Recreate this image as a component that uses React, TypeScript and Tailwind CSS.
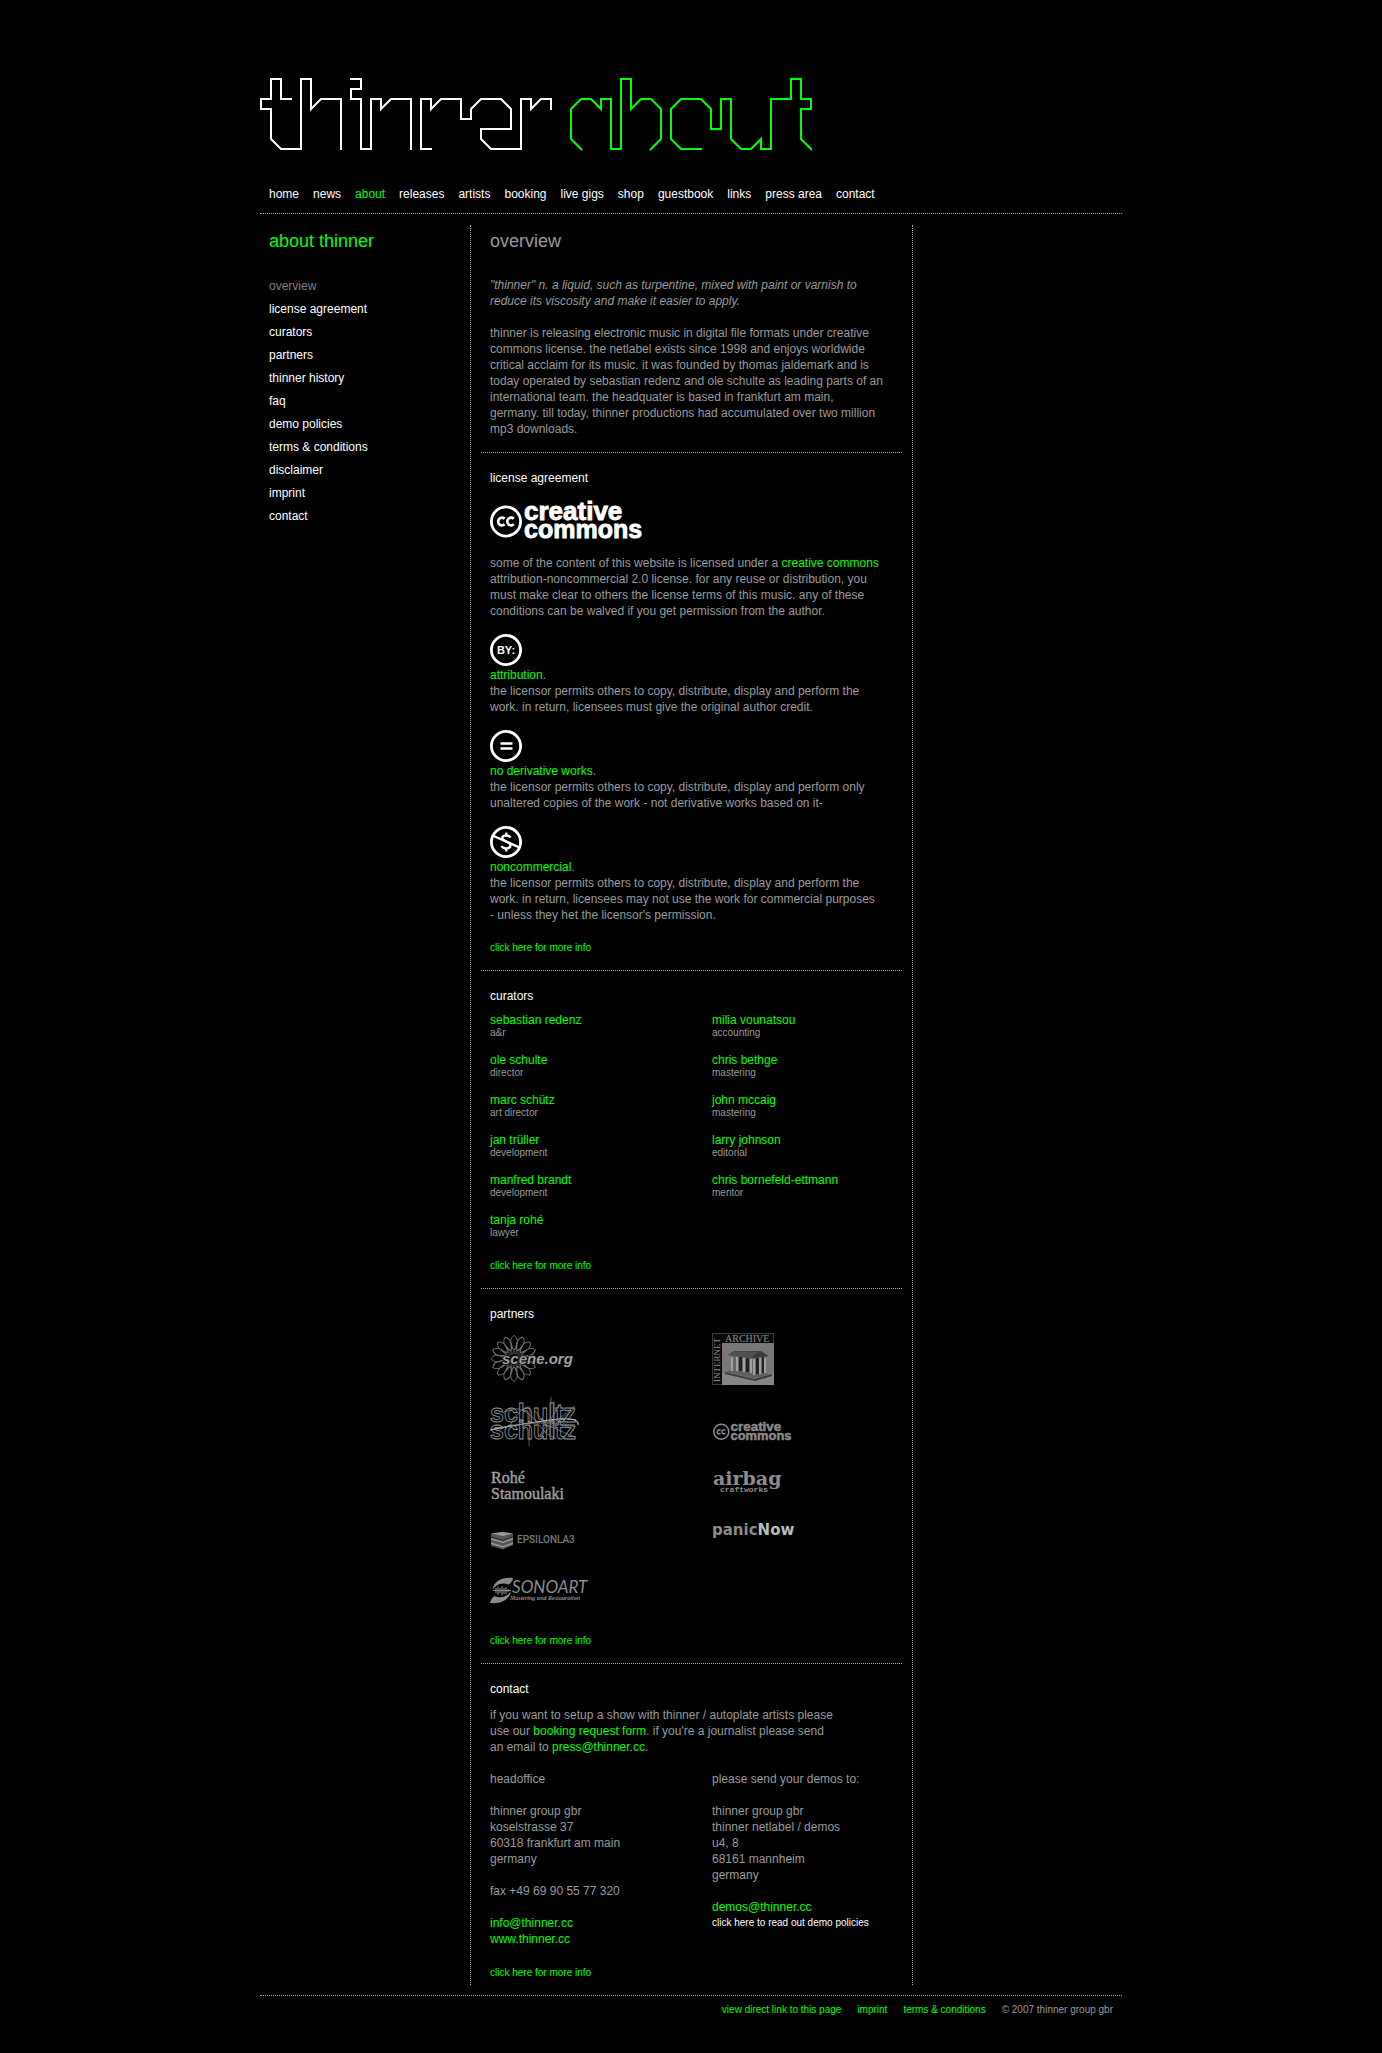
import type { ReactNode } from "react";

const NAV = ["home", "news", "about", "releases", "artists", "booking", "live gigs", "shop", "guestbook", "links", "press area", "contact"];

const SIDE = ["overview", "license agreement", "curators", "partners", "thinner history", "faq", "demo policies", "terms & conditions", "disclaimer", "imprint", "contact"];

const CURATORS: [string, string][][] = [
  [
    ["sebastian redenz", "a&r"],
    ["ole schulte", "director"],
    ["marc schütz", "art director"],
    ["jan trüller", "development"],
    ["manfred brandt", "development"],
    ["tanja rohé", "lawyer"],
  ],
  [
    ["milia vounatsou", "accounting"],
    ["chris bethge", "mastering"],
    ["john mccaig", "mastering"],
    ["larry johnson", "editorial"],
    ["chris bornefeld-ettmann", "mentor"],
  ],
];

function Wordmark() {
  return (
    <svg viewBox="0 0 552 74" className="block h-[74px] w-[552px] max-w-full" fill="none" strokeWidth="2" role="img" aria-label="thinner about">
      <g stroke="#fff">
        <path d="M32 21H21V1H11V21H1V31H11V61L21 71H41V1H51V31L61 21H81V72" />
        <path d="M90 1H101V11H91V21H101V71H111V21H121V31L131 21H151V72" />
        <path d="M172 71H161V21H171V31L181 21H201V41H211V31L221 21H241L251 31V51H221V61L231 71H261V21H271V31L281 21H291V32" />
      </g>
      <g stroke="#0f0">
        <path d="M322 72L311 61V31L321 21H331L341 31V21H351V71H361V1H371V31L381 21H391L401 31V61L390 72" />
        <path d="M442 71H421L411 61V31L421 21H441L451 31V51H461V21H471V61L481 71H491L501 61V71H511V21H531V1H541V21H551V31H541V61L552 72" />
      </g>
    </svg>
  );
}

function CreativeCommons({ className }: { className: string }) {
  return (
    <svg viewBox="0 0 155 38" className={`overflow-visible ${className}`} fill="currentColor" role="img" aria-label="creative commons">
      <circle cx="16" cy="20.5" r="14.6" fill="none" stroke="currentColor" strokeWidth="2.8" />
      <g fill="none" stroke="currentColor" strokeWidth="2.7">
        <path d="M14.6 17.8A3.8 3.8 0 1 0 14.6 23.2" />
        <path d="M23.8 17.8A3.8 3.8 0 1 0 23.8 23.2" />
      </g>
      <g fontFamily="Liberation Sans, Arial, sans-serif" fontWeight="700" stroke="currentColor" strokeWidth="0.9">
        <text x="34" y="19" fontSize="26">creative</text>
        <text x="34" y="36.5" fontSize="25">commons</text>
      </g>
    </svg>
  );
}

function Ring({ label, children }: { label: string; children: ReactNode }) {
  return (
    <svg viewBox="0 0 32 32" className="mt-[15px] block size-8 text-white" fill="none" stroke="currentColor" role="img" aria-label={label}>
      <circle cx="16" cy="16" r="14.6" strokeWidth="2.8" />
      {children}
    </svg>
  );
}

function SceneOrg() {
  const petals = Array.from({ length: 16 }, (_, i) => i * 22.5);
  return (
    <svg viewBox="0 0 84 50" className="block h-[50px] w-[84px] overflow-visible" role="img" aria-label="scene.org">
      <g fill="none" stroke="#777" strokeWidth="0.9">
        {petals.map((a) => (
          <path key={a} d="M24 17C19 11 20 5 24 2.5C28 5 29 11 24 17Z" transform={`rotate(${a} 24 25.5)`} />
        ))}
        {petals.map((a) => (
          <path key={a} d="M24 21L22 12M24 21L26 12" strokeWidth="0.5" transform={`rotate(${a} 24 25.5)`} />
        ))}
      </g>
      <text x="12" y="30.5" fill="#a0a0a0" stroke="#000" strokeWidth="1.5" paintOrder="stroke" fontFamily="Liberation Sans, Arial, sans-serif" fontWeight="700" fontStyle="italic" fontSize="15">
        scene.org
      </text>
    </svg>
  );
}

function Schultz() {
  return (
    <svg viewBox="0 0 90 50" className="mt-[14px] block h-[50px] w-[90px] overflow-visible" fill="none" role="img" aria-label="schultz schultz">
      <g fontFamily="Liberation Sans, Arial, sans-serif" fontWeight="700" fontSize="25" stroke="#999" strokeWidth="0.8">
        <text x="0" y="25">schultz</text>
        <text x="0" y="42">schultz</text>
      </g>
      <g stroke="#888" strokeWidth="0.7">
        <path d="M0 33Q30 27 60 23T88 28" stroke="#bbb" strokeWidth="1.2" />
        <path d="M10 31Q35 25 62 26L86 30" />
        <path d="M12 16Q30 6 42 20L56 36 66 42" />
        <path d="M45 14L58 30 85 9M50 38L62 20 70 8M40 12L39 49M61 0L60 40M64 4V42" />
        <path d="M52 26L85 40M48 40L84 12M68 22L84 34M20 28Q32 8 40 10" />
      </g>
    </svg>
  );
}

function Rohe() {
  return (
    <svg viewBox="0 0 80 34" className="mt-[22px] block h-[34px] w-[80px]" fill="#a0a0a0" fontFamily="Liberation Serif, serif" fontSize="16" stroke="#a0a0a0" strokeWidth="0.4" role="img" aria-label="Rohé Stamoulaki">
      <text x="1" y="14">Rohé</text>
      <text x="1" y="30">Stamoulaki</text>
    </svg>
  );
}

function EpsilonLab() {
  return (
    <svg viewBox="0 0 90 20" className="mt-[28px] block h-[20px] w-[90px]" role="img" aria-label="Epsilonlab">
      <path d="M1 3L12 1 23 3V14L13 18.5 1 15Z" fill="#555" />
      <path d="M1 2.5L12 1 23 2.5 13 5Z" fill="#999" />
      <path d="M1 7L13 10.5 23 7V8.5L13 12 1 8.5ZM1 11.5L13 15 23 11.5V13L13 16.5 1 13Z" fill="#999" />
      <path d="M1 5.5L13 9V10L1 6.5ZM23 5L13 9V10L23 6Z" fill="#222" />
      <text x="27" y="12" fill="#777" fontFamily="Roboto, sans-serif" fontWeight="500" fontSize="10">
        EPSILONLA3
      </text>
    </svg>
  );
}

function Sonoart() {
  return (
    <svg viewBox="0 0 100 27" className="mt-[26px] block h-[27px] w-[100px] overflow-visible" fill="#8c8c8c" role="img" aria-label="Sonoart Mastering und Restauration">
      <path d="M23 1C12 0 4 4 2.500 13C5 8 12 4.500 18.500 7.500C21 6 22.500 4 23 1Z" />
      <path d="M0 26C11 27 19.500 23 21 14C18 19 11 22 4.500 19C2 21 0.500 23 0 26Z" />
      <path d="M3 13.500H21M6 11V16M8 9.500V18M10 11V16M12 9V18.500M14 11V17M16 10V17M18 12V15" stroke="#8c8c8c" strokeWidth="1.1" />
      <text x="22" y="16" fontFamily="Lato, sans-serif" fontStyle="italic" fontSize="17">SONOART</text>
      <text x="20" y="23" fontFamily="Liberation Serif, serif" fontStyle="italic" fontWeight="700" fontSize="6">Mastering und Restauration</text>
    </svg>
  );
}

function InternetArchive() {
  return (
    <svg viewBox="0 0 62 52" className="block h-[52px] w-[62px]" role="img" aria-label="Internet Archive">
      <rect x="0.5" y="0.5" width="61" height="51" fill="#080808" stroke="#3a3a3a" />
      <rect x="10" y="10" width="52" height="42" fill="#777" />
      <rect x="10" y="40" width="52" height="12" fill="#858585" />
      <g fill="#8c8c8c" fontFamily="Liberation Serif, serif">
        <text x="13" y="8.5" fontSize="10">ARCHIVE</text>
        <text transform="translate(8 49) rotate(-90)" fontSize="9">INTERNET</text>
      </g>
      <path d="M13 39L42 46 60 41V43L43 48 13 41Z" fill="#3a3a3a" />
      <path d="M13 39L20 37 60 41 42 45.5Z" fill="#606060" />
      <path d="M19 23H54V40H42L19 37Z" fill="#666" />
      <path d="M27 24H30V38H27ZM34 25H37V39H34ZM44 25H47V41H44ZM50 24H52V40H50Z" fill="#222" />
      <path d="M20 24V38M25 24V38M32 25V39M39 26V40M42 26V42M48 25V41M53 25V40" stroke="#b5b5b5" strokeWidth="1.5" />
      <path d="M16 22L22 18H49L57 23 42 25Z" fill="#3c3c3c" />
      <path d="M16 22L22 18.5H46L40 24Z" fill="#505050" />
    </svg>
  );
}

function Airbag() {
  return (
    <svg viewBox="0 0 90 20" className="mt-[34px] block h-[20px] w-[90px] overflow-visible" fill="#8c8c8c" role="img" aria-label="airbag craftworks">
      <text x="1" y="10" fontFamily="DejaVu Serif, serif" fontWeight="700" fontSize="19">airbag</text>
      <text x="8" y="17" fontFamily="Liberation Mono, monospace" fontWeight="700" fontSize="8">craftworks</text>
    </svg>
  );
}

function PanicNow() {
  return (
    <svg viewBox="0 0 92 22" className="mt-[24px] block h-[22px] w-[92px] overflow-visible" fontFamily="DejaVu Sans, sans-serif" fontWeight="700" fontSize="15" role="img" aria-label="panicNow">
      <text x="0" y="16" fill="#8c8c8c">
        panic<tspan fill="#bbb">Now</tspan>
      </text>
    </svg>
  );
}

function Green({ children }: { children: ReactNode }) {
  return (
    <a href="#" className="text-[#0f0] hover:underline">
      {children}
    </a>
  );
}

function More({ className }: { className: string }) {
  return (
    <p className={`-mb-px text-[10px] ${className}`}>
      <Green>click here for more info</Green>
    </p>
  );
}

function Section({ title, children }: { title: string; children: ReactNode }) {
  return (
    <section className="mt-[15px] border-t border-dotted border-[#aaa] px-[9px] pt-[17px]">
      <h2 className="text-white">{title}</h2>
      {children}
    </section>
  );
}

export default function App() {
  return (
    <div className="min-h-screen bg-black px-4 pt-[78px] pb-[35px] font-['Liberation_Sans',Arial,sans-serif] text-[12px] leading-[16px] text-[#999]">
      <div className="mx-auto w-full max-w-[862px]">
        <header>
          <h1>
            <Wordmark />
          </h1>
          <nav className="mt-[34px] flex flex-wrap gap-x-[14px] border-b border-dotted border-[#aaa] px-[9px] pb-[11px]">
            {NAV.map((n) => (
              <a key={n} href="#" className={n === "about" ? "text-[#0f0]" : "text-white"}>
                {n}
              </a>
            ))}
          </nav>
        </header>

        <div className="mt-[11px] grid grid-cols-[210px_minmax(0,443px)_1fr]">
          <aside className="px-[9px] pt-1">
            <h2 className="text-[18px] leading-[24px] text-[#0f0]">about thinner</h2>
            <nav className="mt-[25px] flex flex-col items-start gap-[7px]">
              {SIDE.map((s) => (
                <a key={s} href="#" className={s === "overview" ? "text-[#808080]" : "text-white"}>
                  {s}
                </a>
              ))}
            </nav>
          </aside>

          <main className="border-x border-dotted border-[#aaa] px-[10px] pt-1 pb-[5px]">
            <section className="px-[9px]">
              <h2 className="text-[18px] leading-[24px]">overview</h2>
              <p className="mt-6 italic">
                "thinner" n. a liquid, such as turpentine, mixed with paint or varnish to
                <br />
                reduce its viscosity and make it easier to apply.
              </p>
              <p className="mt-4">
                thinner is releasing electronic music in digital file formats under creative
                <br />
                commons license. the netlabel exists since 1998 and enjoys worldwide
                <br />
                critical acclaim for its music. it was founded by thomas jaldemark and is
                <br />
                today operated by sebastian redenz and ole schulte as leading parts of an
                <br />
                international team. the headquater is based in frankfurt am main,
                <br />
                germany. till today, thinner productions had accumulated over two million
                <br />
                mp3 downloads.
              </p>
            </section>

            <Section title="license agreement">
              <CreativeCommons className="mt-[15px] block h-[38px] w-[155px] text-white" />
              <p className="mt-4">
                some of the content of this website is licensed under a <Green>creative commons</Green>
                <br />
                attribution-noncommercial 2.0 license. for any reuse or distribution, you
                <br />
                must make clear to others the license terms of this music. any of these
                <br />
                conditions can be walved if you get permission from the author.
              </p>
              <Ring label="attribution">
                <text x="16" y="20" textAnchor="middle" fill="currentColor" stroke="none" fontFamily="Liberation Sans, Arial, sans-serif" fontWeight="700" fontSize="11">
                  BY:
                </text>
              </Ring>
              <p className="mt-px">
                <Green>attribution</Green>.
                <br />
                the licensor permits others to copy, distribute, display and perform the
                <br />
                work. in return, licensees must give the original author credit.
              </p>
              <Ring label="no derivative works">
                <path d="M10.5 13.5H22.5M10.5 18.5H22.5" strokeWidth="2.5" />
              </Ring>
              <p className="mt-px">
                <Green>no derivative works</Green>.
                <br />
                the licensor permits others to copy, distribute, display and perform only
                <br />
                unaltered copies of the work - not derivative works based on it-
              </p>
              <Ring label="noncommercial">
                <path d="M2.5 9.5L29.5 21.5" strokeWidth="2.4" />
                <path d="M20.5 11.5C19 9 12.5 8.5 12.2 12C12.2 15.5 20.5 15.5 20.5 19.5C20 23.5 13 23.2 11.5 20M16.3 6.5V10M16.3 22V25.5" strokeWidth="2.3" />
              </Ring>
              <p className="mt-px">
                <Green>noncommercial</Green>.
                <br />
                the licensor permits others to copy, distribute, display and perform the
                <br />
                work. in return, licensees may not use the work for commercial purposes
                <br />
                - unless they het the licensor's permission.
              </p>
              <More className="mt-[17px]" />
            </Section>

            <Section title="curators">
              <div className="mt-[9px] grid grid-cols-[222px_minmax(0,1fr)]">
                {CURATORS.map((col, i) => (
                  <ul key={i} className="flex flex-col gap-[14px]">
                    {col.map(([name, role]) => (
                      <li key={name}>
                        <div className="leading-[14px]">
                          <Green>{name}</Green>
                        </div>
                        <div className="text-[10px] leading-[12px]">{role}</div>
                      </li>
                    ))}
                  </ul>
                ))}
              </div>
              <More className="mt-[19px]" />
            </Section>

            <Section title="partners">
              <div className="mt-[11px] grid grid-cols-[222px_minmax(0,1fr)]">
                <div>
                  <SceneOrg />
                  <Schultz />
                  <Rohe />
                  <EpsilonLab />
                  <Sonoart />
                </div>
                <div>
                  <InternetArchive />
                  <CreativeCommons className="mt-[36px] ml-px block h-[20px] w-[80px] text-[#8c8c8c]" />
                  <Airbag />
                  <PanicNow />
                </div>
              </div>
              <More className="mt-[29px]" />
            </Section>

            <Section title="contact">
              <p className="mt-[10px]">
                if you want to setup a show with thinner / autoplate artists please
                <br />
                use our <Green>booking request form</Green>. if you're a journalist please send
                <br />
                an email to <Green>press@thinner.cc</Green>.
              </p>
              <div className="mt-4 grid grid-cols-[222px_minmax(0,1fr)]">
                <div>
                  <h3>headoffice</h3>
                  <address className="mt-4 not-italic">
                    thinner group gbr
                    <br />
                    koselstrasse 37
                    <br />
                    60318 frankfurt am main
                    <br />
                    germany
                  </address>
                  <p className="mt-4">fax +49 69 90 55 77 320</p>
                  <p className="mt-4">
                    <Green>info@thinner.cc</Green>
                    <br />
                    <Green>www.thinner.cc</Green>
                  </p>
                </div>
                <div>
                  <h3>please send your demos to:</h3>
                  <address className="mt-4 not-italic">
                    thinner group gbr
                    <br />
                    thinner netlabel / demos
                    <br />
                    u4, 8
                    <br />
                    68161 mannheim
                    <br />
                    germany
                  </address>
                  <p className="mt-4">
                    <Green>demos@thinner.cc</Green>
                  </p>
                  <p className="text-[10px]">
                    <a href="#" className="text-white">
                      click here to read out demo policies
                    </a>
                  </p>
                </div>
              </div>
              <More className="mt-[18px]" />
            </Section>
          </main>
        </div>

        <footer className="mt-[10px] flex flex-wrap justify-end gap-x-4 border-t border-dotted border-[#aaa] px-[9px] pt-[6px] text-[10px]">
          <Green>view direct link to this page</Green>
          <Green>imprint</Green>
          <Green>terms &amp; conditions</Green>
          <span>© 2007 thinner group gbr</span>
        </footer>
      </div>
    </div>
  );
}
